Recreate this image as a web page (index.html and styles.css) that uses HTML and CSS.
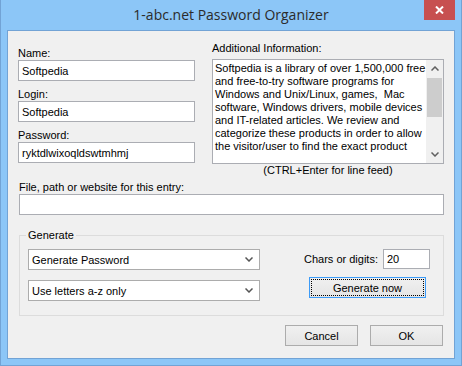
FILE: index.html
```html
<!DOCTYPE html>
<html lang="en">
<head>
    <meta charset="UTF-8">
    <title>1-abc.net Password Organizer</title>
    <link rel="stylesheet" href="styles.css">
</head>
<body>
    <div class="window">
        <div class="titlebar">
            <span class="title">1-abc.net Password Organizer</span>
            <button class="close" type="button">
                <svg width="9" height="8" viewBox="0 0 9 8">
                    <path d="M1 0.5 L8 7.5 M8 0.5 L1 7.5" stroke="#fff" stroke-width="2"/>
                </svg>
            </button>
        </div>

        <div class="client">
            <div class="top">
                <div class="fields">
                    <label for="name">Name:</label>
                    <input type="text" id="name" value="Softpedia">
                    <label for="login">Login:</label>
                    <input type="text" id="login" value="Softpedia">
                    <label for="password">Password:</label>
                    <input type="text" id="password" value="ryktdlwixoqldswtmhmj">
                </div>

                <div class="info">
                    <label>Additional Information:</label>
                    <div class="memo">
                        <div class="memo-text">Softpedia is a library of over 1,500,000 free
and free-to-try software programs for
Windows and Unix/Linux, games,  Mac
software, Windows drivers, mobile devices
and IT-related articles. We review and
categorize these products in order to allow
the visitor/user to find the exact product</div>
                        <div class="scrollbar">
                            <div class="arrow">
                                <svg width="8" height="5" viewBox="0 0 8 5"><path d="M0.5 4.5 L4 1 L7.5 4.5" fill="none" stroke="#606060" stroke-width="1.5"/></svg>
                            </div>
                            <div class="track"><div class="thumb"></div></div>
                            <div class="arrow">
                                <svg width="8" height="5" viewBox="0 0 8 5"><path d="M0.5 0.5 L4 4 L7.5 0.5" fill="none" stroke="#606060" stroke-width="1.5"/></svg>
                            </div>
                        </div>
                    </div>
                    <div class="hint">(CTRL+Enter for line feed)</div>
                </div>
            </div>

            <div class="entry">
                <label for="path">File, path or website for this entry:</label>
                <input type="text" id="path" value="">
            </div>

            <fieldset class="generate">
                <legend>Generate</legend>
                <div class="gen-row">
                    <div class="selects">
                        <div class="select">
                            <span>Generate Password</span>
                            <svg width="8" height="5" viewBox="0 0 8 5"><path d="M0.5 0.5 L4 4 L7.5 0.5" fill="none" stroke="#555" stroke-width="1.5"/></svg>
                        </div>
                        <div class="select">
                            <span>Use letters a-z only</span>
                            <svg width="8" height="5" viewBox="0 0 8 5"><path d="M0.5 0.5 L4 4 L7.5 0.5" fill="none" stroke="#555" stroke-width="1.5"/></svg>
                        </div>
                    </div>
                    <div class="gen-side">
                        <div class="chars">
                            <label for="chars">Chars or digits:</label>
                            <input type="text" id="chars" value="20">
                        </div>
                        <button type="button" class="btn btn-focus">Generate now</button>
                    </div>
                </div>
            </fieldset>

            <div class="actions">
                <button type="button" class="btn">Cancel</button>
                <button type="button" class="btn">OK</button>
            </div>
        </div>
    </div>
</body>
</html>
```

FILE: styles.css
```css
* {
    margin: 0;
    padding: 0;
    box-sizing: border-box;
}

body {
    width: 462px;
    height: 366px;
    font-family: 'Liberation Sans', Arial, sans-serif;
    font-size: 11px;
    color: #000;
    overflow: hidden;
}

.window {
    width: 462px;
    height: 366px;
    background: #8cc6f7;
    border: 1px solid #72a3d5;
    border-top: none;
    display: flex;
    flex-direction: column;
}

.titlebar {
    height: 30px;
    display: grid;
    grid-template-columns: 1fr auto 1fr;
    align-items: start;
}

.title {
    grid-column: 2;
    font-family: 'Open Sans', 'Noto Sans', sans-serif;
    font-size: 14px;
    line-height: 30px;
    color: #2b2b2b;
}

.close {
    grid-column: 3;
    justify-self: end;
    width: 31px;
    height: 20px;
    margin-right: 6px;
    background: #c75050;
    border: none;
    display: flex;
    justify-content: center;
    align-items: center;
}

.client {
    flex: 1;
    margin: 0 6px 6px;
    border: 1px solid #72a3d5;
    background: #f0f0f0;
    padding: 10px 10px 0 10px;
}

label {
    display: block;
    line-height: 14px;
}

input {
    display: block;
    width: 100%;
    height: 21px;
    border: 1px solid #abadb3;
    background: #fff;
    padding: 0 3px;
    font-family: inherit;
    font-size: 11px;
    color: #000;
    outline: none;
}

.top {
    display: grid;
    grid-template-columns: 177px 232px;
    column-gap: 17px;
}

.fields {
    padding-top: 5px;
}

.fields label + input {
    margin-bottom: 6px;
}

.info label {
    margin-bottom: 4px;
}

.memo {
    height: 105px;
    border: 1px solid #abadb3;
    background: #fff;
    display: flex;
}

.memo-text {
    flex: 1;
    padding: 2px 0 0 2px;
    white-space: pre;
    line-height: 13px;
    overflow: hidden;
}

.scrollbar {
    width: 17px;
    background: #f0f0f0;
    display: flex;
    flex-direction: column;
}

.arrow {
    height: 17px;
    display: flex;
    justify-content: center;
    align-items: center;
}

.track {
    flex: 1;
    padding: 1px 1px 0;
}

.thumb {
    height: 39px;
    background: #cdcdcd;
}

.hint {
    text-align: center;
    line-height: 13px;
}

.entry {
    margin-top: 4px;
    margin-left: 1px;
}

.entry label {
    line-height: 13px;
}

.generate {
    margin-top: 13px;
    margin-left: 1px;
    border: 1px solid #dcdcdc;
    padding: 7px 13px 14px 8px;
}

.generate legend {
    line-height: 14px;
    padding: 0 2px;
    margin-left: -2px;
}

.gen-row {
    display: flex;
    justify-content: space-between;
}

.selects {
    width: 232px;
    display: flex;
    flex-direction: column;
    gap: 10px;
}

.select {
    height: 21px;
    border: 1px solid #acacac;
    background: #fff;
    padding: 0 6px 0 3px;
    display: flex;
    justify-content: space-between;
    align-items: center;
}

.gen-side {
    display: flex;
    flex-direction: column;
    align-items: flex-end;
}

.chars {
    display: flex;
    align-items: center;
    gap: 5px;
}

.chars input {
    width: 47px;
    height: 20px;
}

.btn {
    height: 21px;
    border: 1px solid #acacac;
    background: linear-gradient(#f0f0f0, #e5e5e5);
    font-family: inherit;
    font-size: 11px;
    color: #000;
}

.btn-focus {
    width: 117px;
    margin-top: 8px;
    margin-right: 4px;
    border-color: #3c9bf7;
    outline: 1px dotted #000;
    outline-offset: -3px;
}

.actions {
    margin-top: 9px;
    display: flex;
    justify-content: flex-end;
    gap: 12px;
    padding-right: 1px;
}

.actions .btn {
    width: 73px;
}
```
